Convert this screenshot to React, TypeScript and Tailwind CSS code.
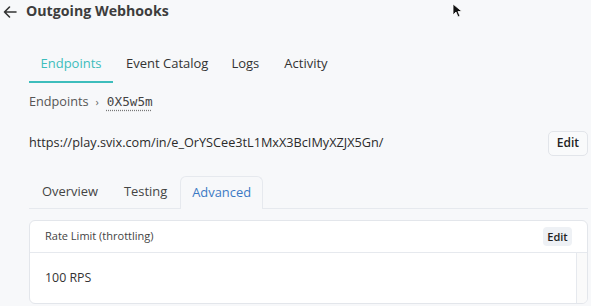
import React from "react";

export default function App() {
  return (
    <div
      className="w-[591px] h-[306px] overflow-hidden bg-[#f7f8fa] text-[#3a3a3a] relative"
      style={{ fontFamily: '"Open Sans", "Noto Sans", sans-serif' }}
    >
      {/* header */}
      <div className="flex items-center h-[23px] pl-[3px]">
        <svg width="14" height="14" viewBox="0 0 14 14" fill="none" stroke="#333" strokeWidth="1.6" strokeLinecap="round" strokeLinejoin="round">
          <path d="M13 7H1.5M6.5 2L1.5 7l5 5" />
        </svg>
        <span className="ml-[9px] text-[14.2px] font-bold text-[#3d3d3d] leading-none">Outgoing Webhooks</span>
      </div>

      {/* mouse cursor */}
      <svg className="absolute left-[452px] top-[3px]" width="10" height="15" viewBox="0 0 10 15">
        <path d="M1 1v11l3-3 2 5 2-1-2-4.5h4z" fill="#111" stroke="#fff" strokeWidth="0.8" />
      </svg>

      {/* main tabs */}
      <div className="flex mt-[24px] ml-[29px] text-[13px]">
        <div className="flex flex-col items-center w-[84px]">
          <span className="h-[33px] leading-[33px] text-[#3dbdbc]">Endpoints</span>
          <div className="mt-[1px] h-[2px] w-full bg-[#3dbdbc]" />
        </div>
        <span className="ml-[13px] h-[33px] leading-[33px] text-[#333]">Event Catalog</span>
        <span className="ml-[23px] h-[33px] leading-[33px] text-[#333]">Logs</span>
        <span className="ml-[25px] h-[33px] leading-[33px] text-[#333]">Activity</span>
      </div>

      {/* breadcrumb */}
      <div className="flex items-center ml-[29px] mt-[9px] h-[20px] text-[12.7px] text-[#555]">
        <span>Endpoints</span>
        <span className="ml-[7px] text-[11px] text-[#666]">›</span>
        <span
          className="ml-[8px] text-[12.7px] text-[#444] underline decoration-dotted decoration-[#777] underline-offset-[3px]"
          style={{ fontFamily: '"DejaVu Sans Mono", monospace' }}
        >
          0X5w5m
        </span>
      </div>

      {/* url row */}
      <div className="flex items-center justify-between ml-[29px] mr-[3px] mt-[18px] h-[26px]">
        <span className="text-[12.7px] text-[#2b2b2b]">https://play.svix.com/in/e_OrYSCee3tL1MxX3BcIMyXZJX5Gn/</span>
        <button className="h-[25px] w-[40px] rounded-[5px] border border-[#e2e5ea] bg-[#f9fafb] text-[12px] font-semibold text-[#222]">
          Edit
        </button>
      </div>

      {/* sub tabs */}
      <div className="ml-[29px] mr-[3px] mt-[20px] flex items-end border-b border-[#e6e9ee] h-[33px] text-[12.9px]">
        <span className="ml-[13px] mb-[7px] text-[#444]">Overview</span>
        <span className="ml-[26px] mb-[7px] text-[#444]">Testing</span>
        <div className="ml-[13px] -mb-px h-[33px] w-[83px] flex items-center justify-center rounded-t-[6px] border border-b-0 border-[#e6e9ee] bg-[#f7f8fa] text-[#3b78c4]">
          Advanced
        </div>
      </div>

      {/* card */}
      <div className="ml-[29px] mr-[3px] mt-[11px] h-[84px] rounded-[6px] border border-[#e3e6eb] bg-white overflow-hidden">
        <div className="flex items-center justify-between h-[32px] border-b border-[#e6e9ee] pl-[15px] pr-[15px]">
          <span className="text-[11px] text-[#444]">Rate Limit (throttling)</span>
          <span className="h-[19px] w-[29px] text-center rounded-[4px] bg-[#eef1f5] text-[11px] font-semibold text-[#222] leading-[19px]">
            Edit
          </span>
        </div>
        <div className="flex h-[52px]">
          <div className="flex-1 pl-[15px] pt-[16px] text-[12.4px] text-[#333]">100 RPS</div>
          <div className="w-[11px] border-l border-[#e6e9ee] bg-[#fafafa]" />
        </div>
      </div>
    </div>
  );
}
